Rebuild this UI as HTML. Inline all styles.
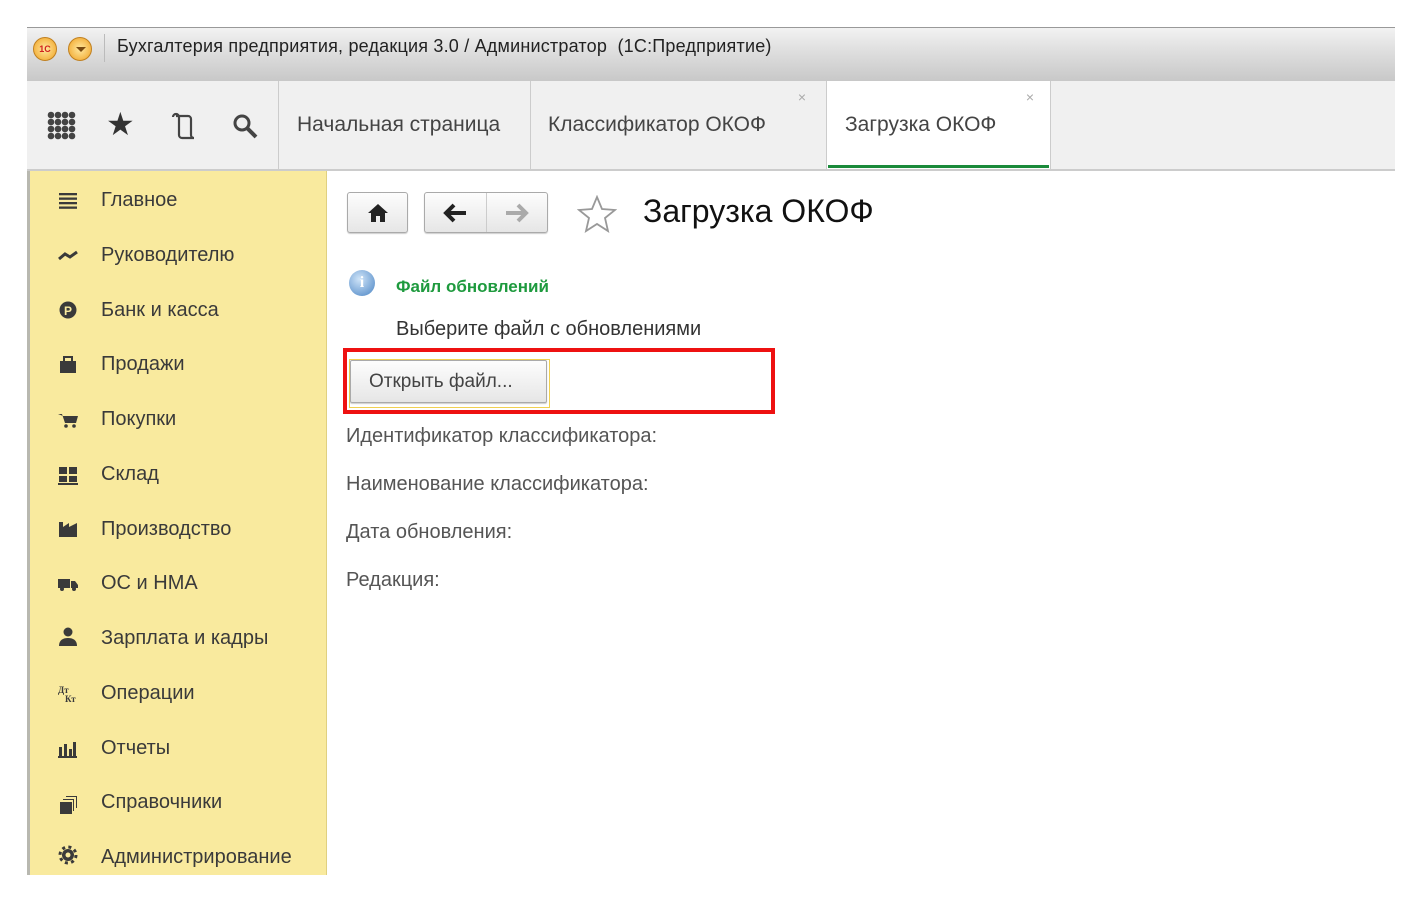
<!DOCTYPE html>
<html><head><meta charset="utf-8"><style>
*{margin:0;padding:0;box-sizing:border-box}
body{width:1422px;height:902px;background:#fff;position:relative;overflow:hidden;font-family:"Liberation Sans",sans-serif;color:#333}
.abs{position:absolute}
#title{left:27px;top:27px;width:1368px;height:54px;background:linear-gradient(#f2f2f2 0%,#e0e0e0 40%,#c8c8c8 100%);border-top:1px solid #999}
#tabs{left:27px;top:81px;width:1368px;height:90px;background:#f0f0f0;border-bottom:2px solid #ccc}
.tab{position:absolute;top:0;height:88px;border-right:1px solid #ccc;font-size:21px;color:#444;line-height:88px;padding-left:18px}
#side{left:27px;top:171px;width:300px;height:704px;background:#f9ea9e;border-left:3px solid #b8b8b0;border-right:1px solid #e0d080}
.it{position:absolute;left:71px;font-size:20px;color:#3a3a3a}
.btn{position:absolute;border:1px solid #aaa;border-radius:3px;background:linear-gradient(#fdfdfd,#e6e6e6);box-shadow:0 1px 1px rgba(0,0,0,.2)}
.lbl{position:absolute;left:346px;font-size:20px;color:#555}
</style></head><body>
<div id="title" class="abs">
 <div class="abs" style="left:6px;top:9px;width:24px;height:24px;border-radius:50%;background:radial-gradient(#ffe9a0,#f0a020);border:1px solid #c08020;font-size:9px;color:#d02020;font-weight:bold;text-align:center;line-height:22px">1С</div>
 <div class="abs" style="left:41px;top:9px;width:24px;height:24px;border-radius:50%;background:radial-gradient(#ffe9a0,#f0a020);border:1px solid #c08020"><div class="abs" style="left:7px;top:9px;width:0;height:0;border-left:5px solid transparent;border-right:5px solid transparent;border-top:5px solid #7a4a10"></div></div>
 <div class="abs" style="left:77px;top:6px;width:1px;height:28px;background:#bbb"></div>
 <div class="abs" style="left:90px;top:8px;font-size:18px;color:#222;letter-spacing:0.2px">Бухгалтерия предприятия, редакция 3.0 / Администратор &nbsp;(1С:Предприятие)</div>
</div>
<div id="tabs" class="abs">
 <svg class="abs" style="left:20px;top:30px" width="30" height="30" viewBox="0 0 30 30" fill="#444"><g><circle cx="4" cy="4" r="3.3"/><circle cx="11" cy="4" r="3.3"/><circle cx="18" cy="4" r="3.3"/><circle cx="25" cy="4" r="3.3"/><circle cx="4" cy="11" r="3.3"/><circle cx="11" cy="11" r="3.3"/><circle cx="18" cy="11" r="3.3"/><circle cx="25" cy="11" r="3.3"/><circle cx="4" cy="18" r="3.3"/><circle cx="11" cy="18" r="3.3"/><circle cx="18" cy="18" r="3.3"/><circle cx="25" cy="18" r="3.3"/><circle cx="4" cy="25" r="3.3"/><circle cx="11" cy="25" r="3.3"/><circle cx="18" cy="25" r="3.3"/><circle cx="25" cy="25" r="3.3"/></g></svg>
 <div class="abs" style="left:79px;top:24px;font-size:32px;color:#333">★</div>
 <svg class="abs" style="left:143px;top:31px" width="28" height="28" viewBox="0 0 28 28" fill="none" stroke="#444" stroke-width="2.2"><path d="M3 5a3 3 0 0 1 6 0v18a3 3 0 0 0 3 3h12a3 3 0 0 1-3-3V7a3 3 0 0 0-3-3H6"/></svg>
 <svg class="abs" style="left:205px;top:32px" width="28" height="28" viewBox="0 0 28 28" fill="none" stroke="#444" stroke-width="3"><circle cx="10" cy="10" r="7"/><path d="M15 15l9 9" stroke-width="4"/></svg>
 <div class="tab" style="left:251px;width:253px;border-left:1px solid #ccc">Начальная страница</div>
 <div class="tab" style="left:503px;width:297px">Классификатор ОКОФ<span class="abs" style="right:20px;top:-28px;font-size:14px;color:#aaa">×</span></div>
 <div class="tab" style="left:800px;width:224px;background:#fff;height:88px">Загрузка ОКОФ<span class="abs" style="right:16px;top:-28px;font-size:14px;color:#aaa">×</span><div class="abs" style="left:1px;right:1px;bottom:1px;height:3px;background:#1a8a3a"></div></div>
</div>
<div id="side" class="abs">
 <div class="it" style="top:18px">Главное</div>
 <div class="it" style="top:73px">Руководителю</div>
 <div class="it" style="top:128px">Банк и касса</div>
 <div class="it" style="top:182px">Продажи</div>
 <div class="it" style="top:237px">Покупки</div>
 <div class="it" style="top:292px">Склад</div>
 <div class="it" style="top:347px">Производство</div>
 <div class="it" style="top:401px">ОС и НМА</div>
 <div class="it" style="top:456px">Зарплата и кадры</div>
 <div class="it" style="top:511px">Операции</div>
 <div class="it" style="top:566px">Отчеты</div>
 <div class="it" style="top:620px">Справочники</div>
 <div class="it" style="top:675px">Администрирование</div>
 <svg class="abs" style="left:26px;top:16px" width="24" height="680" viewBox="0 0 24 680" fill="#3a3a3a">
  <rect x="3" y="6" width="18" height="2.3"/><rect x="3" y="10.5" width="18" height="2.3"/><rect x="3" y="15" width="18" height="2.3"/><rect x="3" y="19.5" width="18" height="2.3"/>
  <path d="M3 72l6-5 5 3 7-5" fill="none" stroke="#3a3a3a" stroke-width="3"/>
  <circle cx="12" cy="123" r="8.5"/><text x="8" y="128" font-size="12" fill="#f9ea9e" font-weight="bold" font-family="Liberation Sans">Р</text>
  <rect x="4" y="174" width="16" height="12"/><path d="M8 174v-4h8v4" fill="none" stroke="#3a3a3a" stroke-width="2"/>
  <path d="M2 227h4l3 9h11l2-7H7z"/><circle cx="10" cy="239" r="1.8"/><circle cx="18" cy="239" r="1.8"/>
  <rect x="3" y="280" width="8" height="7"/><rect x="13" y="280" width="8" height="7"/><rect x="3" y="289" width="8" height="6"/><rect x="13" y="289" width="8" height="6"/><rect x="2" y="296" width="20" height="2"/>
  <path d="M3 350v-15h4v5l6-4v4l8-4v14z"/>
  <rect x="2" y="392" width="12" height="9"/><path d="M15 394h4l3 4v3h-7z"/><circle cx="6" cy="402" r="2"/><circle cx="18" cy="402" r="2"/>
  <circle cx="12" cy="445" r="4.5"/><path d="M3 459c0-6 4-8 9-8s9 2 9 8z"/>
  <text x="2" y="506" font-size="9" font-family="Liberation Serif" font-weight="bold">Дт</text><text x="9" y="515" font-size="9" font-family="Liberation Serif" font-weight="bold">Кт</text>
  <rect x="3" y="560" width="3" height="10"/><rect x="8" y="557" width="3" height="13"/><rect x="13" y="562" width="3" height="8"/><rect x="17" y="555" width="3" height="15"/><rect x="2" y="569" width="19" height="2"/>
  <rect x="4" y="615" width="12" height="12"/><path d="M7 612h11v12h-1v-11H7z"/><path d="M10 609h11v12h-1v-11H10z"/>
  <circle cx="12" cy="668" r="6"/><circle cx="12" cy="668" r="8" fill="none" stroke="#3a3a3a" stroke-width="3" stroke-dasharray="3 3.3"/><circle cx="12" cy="668" r="2.5" fill="#f9ea9e"/>
 </svg>
</div>
<div class="btn" style="left:347px;top:192px;width:61px;height:41px"><svg class="abs" style="left:19px;top:10px" width="22" height="20" viewBox="0 0 22 20"><path d="M11 1L1 10h3v9h5v-6h4v6h5v-9h3z" fill="#222"/></svg></div>
<div class="btn" style="left:424px;top:192px;width:124px;height:41px"><div class="abs" style="left:61px;top:0;width:1px;height:39px;background:#ccc"></div>
 <svg class="abs" style="left:18px;top:10px" width="26" height="20" viewBox="0 0 26 20"><path d="M3 10h20M11 2l-8 8 8 8" fill="none" stroke="#222" stroke-width="4"/></svg>
 <svg class="abs" style="left:78px;top:10px" width="26" height="20" viewBox="0 0 26 20"><path d="M3 10h20M15 2l8 8-8 8" fill="none" stroke="#aaa" stroke-width="4"/></svg></div>
<svg class="abs" style="left:577px;top:195px" width="40" height="38" viewBox="0 0 40 38"><path d="M20 2l5 12 13 1-10 8 3 13-11-7-11 7 3-13-10-8 13-1z" fill="none" stroke="#999" stroke-width="1.8"/></svg>
<div class="abs" style="left:643px;top:193px;font-size:32px;color:#111">Загрузка ОКОФ</div>
<div class="abs" style="left:349px;top:270px;width:26px;height:26px;border-radius:50%;background:radial-gradient(circle at 40% 35%,#cfe4f8,#4a84c4);color:#fff;font:bold 16px 'Liberation Serif',serif;text-align:center;line-height:26px">i</div>
<div class="abs" style="left:396px;top:277px;font-size:17px;font-weight:bold;color:#1e9a3e">Файл обновлений</div>
<div class="abs" style="left:396px;top:318px;font-size:20px;color:#333">Выберите файл с обновлениями</div>
<div class="abs" style="left:343px;top:348px;width:432px;height:66px;border:4px solid #ee1111"></div>
<div class="abs" style="left:349px;top:359px;width:201px;height:49px;border:1px solid #f0d050"></div>
<div class="btn" style="left:350px;top:360px;width:197px;height:43px;font-size:19px;color:#444;line-height:41px;padding-left:18px;border-radius:2px">Открыть файл...</div>
<div class="lbl" style="top:425px">Идентификатор классификатора:</div>
<div class="lbl" style="top:473px">Наименование классификатора:</div>
<div class="lbl" style="top:521px">Дата обновления:</div>
<div class="lbl" style="top:569px">Редакция:</div>
</body></html>
